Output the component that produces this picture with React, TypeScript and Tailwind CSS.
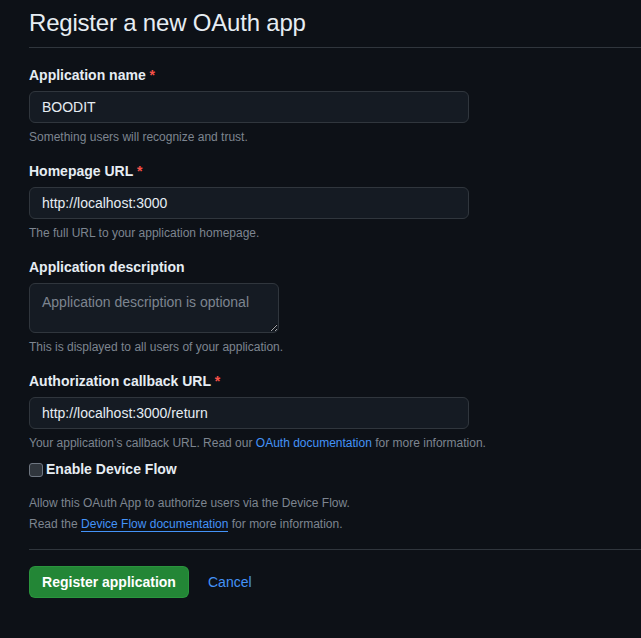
export default function App() {
  const label = 'block text-[14px] font-semibold leading-[21px] text-[#e6edf3]';
  const input =
    'block h-[32px] w-[440px] rounded-[6px] border border-[#30363d] bg-[#151b23] px-[12px] text-[14px] text-[#e6edf3] outline-none';
  const note = 'mt-[5px] text-[12px] leading-[18px] text-[#7d8590]';

  return (
    <div className="min-h-[638px] bg-[#0d1117] pl-[29px] font-['Liberation_Sans',sans-serif] text-[#e6edf3]">
      <div className="border-b border-[#30363d] pb-[7px] pt-[6px]">
        <h1 className="text-[24px] font-normal leading-[34px] tracking-[-0.2px]">Register a new OAuth app</h1>
      </div>

      <form className="pt-[17px]">
        <div>
          <label className={label}>
            Application name <span className="text-[#f85149]">*</span>
          </label>
          <input className={`${input} mt-[5px]`} defaultValue="BOODIT" />
          <p className={note}>Something users will recognize and trust.</p>
        </div>

        <div className="mt-[15px]">
          <label className={label}>
            Homepage URL <span className="text-[#f85149]">*</span>
          </label>
          <input className={`${input} mt-[5px]`} defaultValue="http://localhost:3000" />
          <p className={note}>The full URL to your application homepage.</p>
        </div>

        <div className="mt-[15px]">
          <label className={label}>Application description</label>
          <textarea
            className="mt-[5px] block h-[50px] w-[250px] resize rounded-[6px] border border-[#30363d] bg-[#151b23] px-[12px] py-[8px] text-[14px] leading-[20px] text-[#e6edf3] outline-none placeholder:text-[#7d8590]"
            placeholder="Application description is optional"
          />
          <p className={note}>This is displayed to all users of your application.</p>
        </div>

        <div className="mt-[15px]">
          <label className={label}>
            Authorization callback URL <span className="text-[#f85149]">*</span>
          </label>
          <input className={`${input} mt-[5px]`} defaultValue="http://localhost:3000/return" />
          <p className={note}>
            Your application’s callback URL. Read our{' '}
            <a className="text-[#4493f8]">OAuth documentation</a> for more information.
          </p>
        </div>

        <div className="mt-[7px]">
          <label className="flex items-center gap-[3px] text-[14px] font-semibold leading-[21px]">
            <span className="block h-[14px] w-[14px] rounded-[3px] border border-[#6e7681] bg-[#30363d]" />
            Enable Device Flow
          </label>
          <p className="mt-[13px] text-[12px] leading-[21px] text-[#7d8590]">
            Allow this OAuth App to authorize users via the Device Flow.
          </p>
          <p className="text-[12px] leading-[21px] text-[#7d8590]">
            Read the{' '}
            <a className="border-b border-[#4493f8] text-[#4493f8]">Device Flow documentation</a> for
            more information.
          </p>
        </div>

        <div className="mt-[14px] border-t border-[#30363d] pt-[16px]">
          <div className="flex items-center gap-[19px]">
            <button
              type="button"
              className="h-[32px] w-[160px] rounded-[6px] border border-[#2ea043]/60 bg-[#238636] text-[14px] font-semibold text-white"
            >
              Register application
            </button>
            <a className="text-[14px] text-[#4493f8]">Cancel</a>
          </div>
        </div>
      </form>
    </div>
  );
}
